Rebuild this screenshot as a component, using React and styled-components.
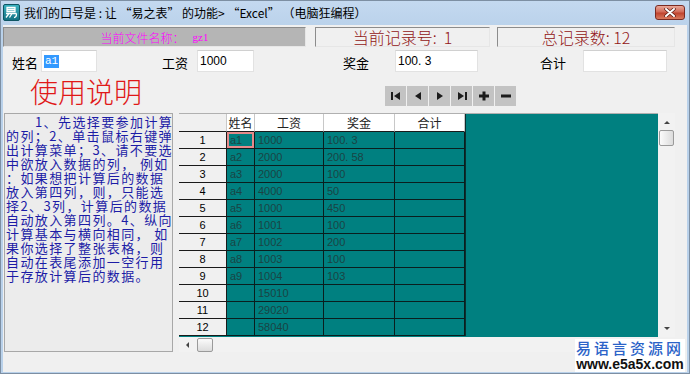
import React from 'react'
import styled, { createGlobalStyle } from 'styled-components'

const GlobalStyle = createGlobalStyle`
  html, body {
    margin: 0;
    padding: 0;
    background: #ffffff;
  }
  body {
    font-family: "Noto Sans CJK SC", "Liberation Sans", sans-serif;
  }
`

const Window = styled.div`
  position: relative;
  width: 690px;
  height: 374px;
  display: flex;
  flex-direction: column;
  background: linear-gradient(#c4d9f0, #b9d1ea 30px, #b9d1ea);
  box-shadow: inset 0 0 0 1px #7d8fa3;
  overflow: hidden;
`

const TitleBar = styled.div`
  height: 25px;
  flex: none;
  display: flex;
  align-items: center;
  padding-left: 3px;
`

const TitleText = styled.span`
  margin-left: 4px;
  font-size: 12px;
  color: #000;
  white-space: pre;
`

const CloseButton = styled.div`
  margin-left: auto;
  margin-right: 5px;
  align-self: flex-start;
  margin-top: 5px;
  width: 30px;
  height: 15px;
  box-sizing: border-box;
  border: 1px solid #7a2a22;
  border-radius: 3px;
  background: linear-gradient(#e9a899, #d26a58 45%, #c0442f 55%, #d97a5e);
  display: flex;
  align-items: center;
  justify-content: center;
`

const Client = styled.div`
  flex: 1;
  margin: 0 3px 2px 3px;
  background: #f0f0f0;
  display: flex;
  flex-direction: column;
`

const InfoRow = styled.div`
  margin-top: 2px;
  height: 20px;
  display: flex;
`

const InfoBox = styled.div`
  width: ${p => p.$w}px;
  margin-left: ${p => p.$ml || 0}px;
  box-sizing: border-box;
  border: 1px solid #8c8c8c;
  border-right-color: #e6e6e6;
  border-bottom-color: #e6e6e6;
  background: ${p => p.$bg || '#f0f0f0'};
  color: ${p => p.$color};
  font-size: ${p => p.$size}px;
  font-weight: 300;
  display: flex;
  align-items: center;
  justify-content: center;
  white-space: pre;
`

const SerifSmall = styled.span`
  font-family: "Liberation Serif", serif;
  font-size: 11px;
  margin-left: 8px;
`

const FieldRow = styled.div`
  margin-top: 3px;
  height: 22px;
  display: flex;
  align-items: flex-end;
`

const Label = styled.span`
  margin-left: ${p => p.$ml}px;
  width: 26px;
  font-size: 13px;
  line-height: 16px;
  color: #000;
  white-space: nowrap;
  padding-bottom: 1px;
`

const Input = styled.div`
  margin-left: ${p => p.$ml}px;
  width: ${p => p.$w}px;
  height: 22px;
  box-sizing: border-box;
  background: #ffffff;
  border: 1px solid #e2e2e2;
  border-top-color: #d0d0d0;
  display: flex;
  align-items: center;
  padding-left: 2px;
  font-family: "Liberation Sans", sans-serif;
  font-size: 12px;
  color: #000;
`

const Selected = styled.span`
  background: #3399ff;
  color: #fff;
  font-family: "Liberation Mono", monospace;
  font-size: 11px;
  line-height: 13px;
  padding: 0 1px;
`

const MidRow = styled.div`
  height: 41px;
  display: flex;
  align-items: flex-start;
`

const BigTitle = styled.div`
  margin-left: 27px;
  margin-top: 2px;
  font-size: 28px;
  font-weight: 300;
  line-height: 34px;
  color: #e01818;
`

const NavBar = styled.div`
  margin-left: 243px;
  margin-top: 14px;
  display: flex;
  gap: 1px;
`

const NavButton = styled.div`
  width: 21px;
  height: 20px;
  background: #c3c3c3;
  display: flex;
  align-items: center;
  justify-content: center;
`

const Main = styled.div`
  height: 239px;
  display: flex;
`

const NotePanel = styled.div`
  margin-left: 1px;
  width: 169px;
  box-sizing: border-box;
  border: 1px solid #a8a8a8;
  background: #ececec;
  padding: 1px 0 0 1px;
  color: #1c1ca6;
  font-size: 13px;
  letter-spacing: 1.4px;
  line-height: 14px;
  overflow: hidden;
`

const NoteLine = styled.div`
  white-space: pre;
  height: 14px;
  padding-left: ${p => p.$indent || 0}px;
`

const GridWrap = styled.div`
  margin-left: 6px;
  width: 496px;
  display: flex;
  flex-direction: column;
`

const GridTop = styled.div`
  height: 224px;
  display: flex;
`

const DataArea = styled.div`
  width: 479px;
  background: #008080;
  border-top: 1px solid #b0b0b0;
  box-sizing: border-box;
  overflow: hidden;
`

const Table = styled.div`
  display: grid;
  grid-template-columns: 48px 28px 69px 71px 70px;
  grid-template-rows: 18px repeat(12, 17px);
  width: 286px;
  border-right: 1px solid #0b2f2f;
`

const HeadCell = styled.div`
  background: ${p => (p.$corner ? '#f0f0f0' : '#ffffff')};
  border-right: 1px solid #c8c8c8;
  border-bottom: 1px solid #1a1a1a;
  display: flex;
  align-items: center;
  justify-content: center;
  font-size: 12px;
  color: #222;
`

const RowHead = styled.div`
  background: #f0f0f0;
  border-right: 1px solid #1a1a1a;
  border-bottom: 1px solid #1a1a1a;
  display: flex;
  align-items: center;
  justify-content: center;
  font-family: "Liberation Sans", sans-serif;
  font-size: 11px;
  color: #000;
`

const Cell = styled.div`
  border-right: 1px solid #0a1e1e;
  border-bottom: 1px solid #0a1e1e;
  box-shadow: ${p => (p.$active ? 'inset 0 0 0 2px #e48a8a' : 'none')};
  display: flex;
  align-items: center;
  padding-left: 3px;
  font-family: "Liberation Sans", sans-serif;
  font-size: 11px;
  color: #1a4444;
`

const VScroll = styled.div`
  width: 17px;
  background: #f2f2f2;
  display: flex;
  flex-direction: column;
  align-items: center;
`

const HScroll = styled.div`
  height: 15px;
  display: flex;
  align-items: center;
  background: #f2f2f2;
  width: 479px;
`

const Thumb = styled.div`
  width: ${p => p.$w}px;
  height: ${p => p.$h}px;
  box-sizing: border-box;
  border: 1px solid #9a9a9a;
  border-radius: 2px;
  background: linear-gradient(${p => (p.$horiz ? '180deg' : '90deg')}, #fbfbfb, #dcdcdc);
  margin-left: ${p => p.$ml || 0}px;
  margin-top: ${p => p.$mt || 0}px;
`

const Arrow = styled.div`
  width: 0;
  height: 0;
  margin-left: ${p => p.$ml || 0}px;
  margin-top: ${p => p.$mt || 0}px;
  border-style: solid;
  border-color: transparent;
  ${p => p.$dir === 'up' && 'border-width: 0 3px 3px 3px; border-bottom-color: #444;'}
  ${p => p.$dir === 'down' && 'border-width: 3px 3px 0 3px; border-top-color: #444;'}
  ${p => p.$dir === 'left' && 'border-width: 3px 3px 3px 0; border-right-color: #444;'}
`

const Watermark = styled.div`
  position: absolute;
  right: 5px;
  bottom: 2px;
  width: 110px;
  height: 33px;
  background: #ffffff;
  display: flex;
  flex-direction: column;
  align-items: center;
  justify-content: center;
`

const MarkCn = styled.div`
  font-size: 15px;
  line-height: 16px;
  letter-spacing: 3px;
  font-weight: 500;
  color: #2b63c8;
`

const MarkUrl = styled.div`
  font-family: "Liberation Sans", sans-serif;
  font-size: 14px;
  line-height: 16px;
  font-weight: bold;
  color: #111;
`

const rows = [
  ['1', 'a1', '1000', '100. 3'],
  ['2', 'a2', '2000', '200. 58'],
  ['3', 'a3', '2000', '100'],
  ['4', 'a4', '4000', '50'],
  ['5', 'a5', '1000', '450'],
  ['6', 'a6', '1001', '100'],
  ['7', 'a7', '1002', '200'],
  ['8', 'a8', '1003', '100'],
  ['9', 'a9', '1004', '103'],
  ['10', '', '15010', ''],
  ['11', '', '29020', ''],
  ['12', '', '58040', ''],
]

const noteLines = [
  ['1、先选择要参加计算', 29],
  ['的列；2、单击鼠标右键弹'],
  ['出计算菜单；3、请不要选'],
  ['中欲放入数据的列， 例如'],
  ['：如果想把计算后的数据'],
  ['放入第四列，则，只能选'],
  ['择2、3列，计算后的数据'],
  ['自动放入第四列。4、纵向'],
  ['计算基本与横向相同， 如'],
  ['果你选择了整张表格，则'],
  ['自动在表尾添加一空行用'],
  ['于存放计算后的数据。'],
]

const AppIcon = () => (
  <svg width="17" height="17" viewBox="0 0 17 17">
    <defs>
      <linearGradient id="ig" x1="0" y1="0" x2="0" y2="1">
        <stop offset="0" stopColor="#3bb3c2" />
        <stop offset="1" stopColor="#126f80" />
      </linearGradient>
    </defs>
    <rect x="0.5" y="0.5" width="16" height="16" rx="1.5" fill="url(#ig)" stroke="#0d5563" />
    <path d="M4 3.5h8v4H4zM4 5.5h8M3 9.5h10.5M6 9.5l-3 4M9 9.5l-2.5 4M13.5 9.5c0 2.5-0.5 4-2.5 4" fill="none" stroke="#fff" strokeWidth="1.3" />
  </svg>
)

const NavIcon = ({ kind }) => (
  <svg width="12" height="10" viewBox="0 0 12 10" fill="#1c1c1c">
    {kind === 'first' && (
      <>
        <rect x="1" y="1" width="2" height="8" />
        <path d="M10 1v8L4 5z" />
      </>
    )}
    {kind === 'prev' && <path d="M9 1v8L3 5z" />}
    {kind === 'next' && <path d="M3 1v8l6-4z" />}
    {kind === 'last' && (
      <>
        <path d="M2 1v8l6-4z" />
        <rect x="9" y="1" width="2" height="8" />
      </>
    )}
    {kind === 'add' && <path d="M4.5 0.5h3v3h3.5v3H7.5v3h-3v-3H1v-3h3.5z" />}
    {kind === 'del' && <rect x="1" y="3.5" width="10" height="3" />}
  </svg>
)

const CloseIcon = () => (
  <svg width="12" height="9" viewBox="0 0 12 9">
    <path d="M2 1l8 7M10 1L2 8" stroke="#5a1a12" strokeWidth="3.4" strokeLinecap="round" />
    <path d="M2 1l8 7M10 1L2 8" stroke="#ffffff" strokeWidth="2" strokeLinecap="round" />
  </svg>
)

export default function App() {
  return (
    <>
      <GlobalStyle />
      <Window>
        <TitleBar>
          <AppIcon />
          <TitleText>我们的口号是 : 让 “易之表” 的功能&gt; “Excel” （电脑狂编程）</TitleText>
          <CloseButton>
            <CloseIcon />
          </CloseButton>
        </TitleBar>
        <Client>
          <InfoRow>
            <InfoBox $w={303} $bg="#b5b5b5" $color="#ff00ff" $size={12}>
              当前文件名称：<SerifSmall>gz1</SerifSmall>
            </InfoBox>
            <InfoBox $w={175} $ml={9} $color="#921515" $size={16}>
              当前记录号:  1
            </InfoBox>
            <InfoBox $w={178} $ml={7} $color="#921515" $size={16}>
              总记录数: 12
            </InfoBox>
          </InfoRow>

          <FieldRow>
            <Label $ml={9}>姓名</Label>
            <Input $ml={3} $w={56}>
              <Selected>a1</Selected>
            </Input>
            <Label $ml={65}>工资</Label>
            <Input $ml={9} $w={57}>1000</Input>
            <Label $ml={89}>奖金</Label>
            <Input $ml={26} $w={83}>100. 3</Input>
            <Label $ml={62}>合计</Label>
            <Input $ml={17} $w={84} />
          </FieldRow>

          <MidRow>
            <BigTitle>使用说明</BigTitle>
            <NavBar>
              {['first', 'prev', 'next', 'last', 'add', 'del'].map(k => (
                <NavButton key={k}>
                  <NavIcon kind={k} />
                </NavButton>
              ))}
            </NavBar>
          </MidRow>

          <Main>
            <NotePanel>
              {noteLines.map(([text, indent], i) => (
                <NoteLine key={i} $indent={indent}>
                  {text}
                </NoteLine>
              ))}
            </NotePanel>
            <GridWrap>
              <GridTop>
                <DataArea>
                  <Table>
                    <HeadCell $corner />
                    <HeadCell>姓名</HeadCell>
                    <HeadCell>工资</HeadCell>
                    <HeadCell>奖金</HeadCell>
                    <HeadCell>合计</HeadCell>
                    {rows.map(([n, name, pay, bonus]) => (
                      <React.Fragment key={n}>
                        <RowHead>{n}</RowHead>
                        <Cell $active={n === '1'}>{name}</Cell>
                        <Cell>{pay}</Cell>
                        <Cell>{bonus}</Cell>
                        <Cell />
                      </React.Fragment>
                    ))}
                  </Table>
                </DataArea>
                <VScroll>
                  <Arrow $dir="up" $mt={8} />
                  <Thumb $w={15} $h={16} $mt={6} />
                  <Arrow $dir="down" $mt={181} />
                </VScroll>
              </GridTop>
              <HScroll>
                <Arrow $dir="left" $ml={7} />
                <Thumb $horiz $w={16} $h={14} $ml={8} />
              </HScroll>
            </GridWrap>
          </Main>
        </Client>
        <Watermark>
          <MarkCn>易语言资源网</MarkCn>
          <MarkUrl>www.e5a5x.com</MarkUrl>
        </Watermark>
      </Window>
    </>
  )
}
